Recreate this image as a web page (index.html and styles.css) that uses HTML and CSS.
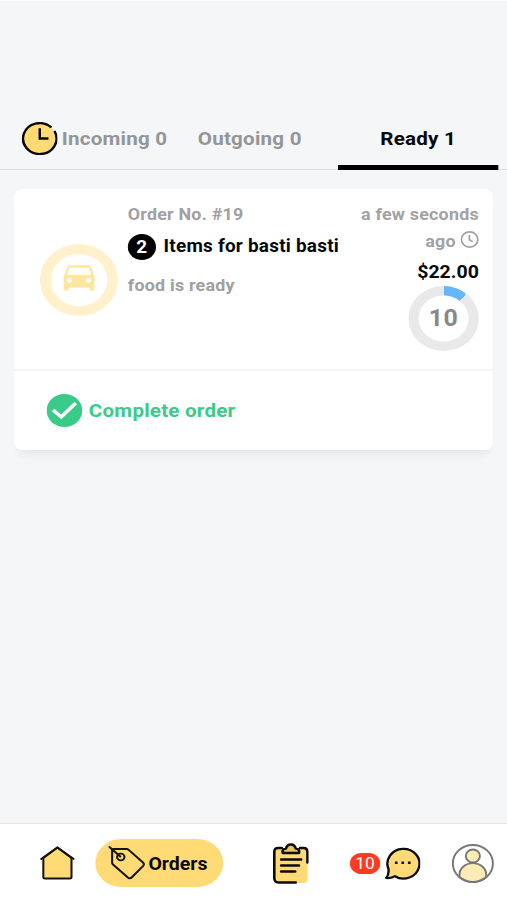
FILE: index.html
```html
<!DOCTYPE html>
<html lang="en">
<head>
<meta charset="utf-8">
<title>Orders</title>
<link rel="stylesheet" href="styles.css">
</head>
<body>
<div class="app">
  <header class="tabs">
    <div class="tab tab-incoming">
      <svg class="tab-icon" width="33" height="33" viewBox="0 0 32 32" fill="none" stroke="#080808" stroke-width="2.2">
        <circle cx="16" cy="16" r="14.5" fill="#ffda75" stroke="none"/>
        <path d="M26 4.7A15 15 0 1 0 29.7 9.5" stroke-linecap="round"/>
        <path d="M16.200 6v10h7.8"/>
      </svg>
      <span>Incoming 0</span>
    </div>
    <div class="tab tab-outgoing"><span>Outgoing 0</span></div>
    <div class="tab tab-ready"><span>Ready 1</span></div>
  </header>
  <main class="content">
    <article class="card">
      <div class="summary">
        <div class="type">
          <div class="type-ring">
            <svg class="car" width="38" height="38" viewBox="0 0 24 24" fill="#ffe69e"><path d="M18.92 5.01C18.72 4.42 18.16 4 17.5 4h-11c-.66 0-1.21.42-1.42 1.01L3 11v8c0 .55.45 1 1 1h1c.55 0 1-.45 1-1v-1h12v1c0 .55.45 1 1 1h1c.55 0 1-.45 1-1v-8l-2.08-5.99zM6.5 15c-.83 0-1.5-.67-1.5-1.5S5.67 12 6.5 12s1.500.67 1.500 1.500S7.330 15 6.500 15zm11 0c-.83 0-1.500-.67-1.500-1.500s.67-1.500 1.500-1.500 1.500.67 1.500 1.500-.67 1.500-1.500 1.500zM5 10l1.300-4.500h11.400L19 10H5z"/></svg>
          </div>
        </div>
        <div class="details">
          <div class="number">Order No. #19</div>
          <div class="items"><span class="count">2</span><span class="items-text">Items for basti basti</span></div>
          <div class="status">food is ready</div>
        </div>
        <div class="meta">
          <div class="time">a few seconds<br>ago <svg class="time-icon" width="17" height="17" viewBox="0 0 17 17" fill="none" stroke="#a2a2a2" stroke-width="1.6"><circle cx="8.500" cy="8.500" r="7.600"/><path d="M8.300 4v4.700l3 2"/></svg></div>
          <div class="price">$22.00</div>
          <div class="gauge"><span>10</span></div>
        </div>
      </div>
      <div class="action">
        <svg width="33" height="33" viewBox="0 0 33 33" fill="none"><circle cx="16.500" cy="16.500" r="16.500" fill="#3bcb89"/><path d="M6 16l7.500 7L27 9" stroke="#fff" stroke-width="3.300"/></svg>
        <span>Complete order</span>
      </div>
    </article>
  </main>
  <nav class="nav">
    <svg class="nav-home" width="32" height="34" viewBox="0 0 32 34" fill="#ffda75" stroke="#15130a" stroke-width="1.900" stroke-linejoin="round" stroke-linecap="round"><path d="M3 12v19q0 1.500 1.500 1.500h23q1.500 0 1.500-1.500V12L16 1.500z"/><path d="M1 13L16 1.500 31 13" fill="none"/></svg>
    <div class="nav-orders">
      <svg width="34" height="34" viewBox="0 0 34 34" fill="none" stroke="#15130a" stroke-width="1.900" stroke-linejoin="round" stroke-linecap="round"><path d="M3.500 4.500q0-1.500 1.500-1.500h12q1 0 1.800.8L32 16.500q1.500 1.500.2 3.300L21.500 31.500q-1.500 1.500-3.200.2L4.300 18.500q-.8-.8-.8-1.800z"/><circle cx="11.500" cy="11" r="3.400"/><path d="M1 1l10 9.500"/></svg>
      <span>Orders</span>
    </div>
    <svg class="nav-list" width="33" height="41" viewBox="0 0 33 41" fill="none" stroke="#0b0b0b" stroke-width="2.400" stroke-linecap="round" stroke-linejoin="round"><path d="M4 5h25q3 0 3 3v28q0 4-4 4H4q-3 0-3-3V8q0-3 3-3z" fill="#ffda75" stroke="none"/><path d="M8 5H5Q1.200 5 1.200 9v26q0 4.500 4 4.500H21M25 5h3q3.800 0 3.800 4v10.500"/><path d="M9 10q-1-4 3-4.500 1-4 4.500-4t4.500 4q4 .5 3 4.500z" fill="#e9c35f"/><path d="M7.500 16.500h18.500M7.500 22.500h16.500M7.500 28.500h13"/></svg>
    <div class="nav-chat">
      <span class="badge">10</span>
      <svg width="33" height="34" viewBox="0 0 33 34"><path d="M3.600 23A14.800 14.800 0 1 1 9.500 30.200Q6.500 32.500 1.500 32Q4.200 29 3.600 23z" fill="#ffda75" stroke="#0b0b0b" stroke-width="2.200" stroke-linejoin="round"/><path d="M9.500 15.500h2.500v2.500H9.500zM15.500 15.500H18v2.500h-2.500zM21.500 15.500H24v2.500h-2.500z" fill="#111"/></svg>
    </div>
    <svg class="nav-user" width="39" height="39" viewBox="0 0 39 39" fill="#ffecb5" stroke="#777" stroke-width="1.800"><circle cx="19.500" cy="19.500" r="18.500" fill="none"/><circle cx="19.500" cy="12" r="6.500"/><path d="M7.200 33V30.500a12.300 11.300 0 0 1 24.600 0V33Q26 38 19.500 38T7.200 33z"/></svg>
  </nav>
</div>
</body>
</html>
```
FILE: styles.css
```css
* { box-sizing: border-box; }

body {
  margin: 0;
  background: #f4f6f8;
  overflow: hidden;
}

.app {
  display: flex;
  flex-direction: column;
  width: 468px;
  height: 900px;
  border-top: 1px solid #fbfcfc;
  background: #f4f6f8;
  font-family: Roboto, "Liberation Sans", sans-serif;
  font-weight: 700;
  color: #080808;
  transform: scaleX(1.08333);
  transform-origin: 0 0;
}

.tabs {
  display: grid;
  grid-template-columns: 164px 148px 148px;
  height: 169px;
  padding-top: 105px;
  border-bottom: 1px solid #dcdee0;
  font-size: 19px;
  letter-spacing: 0.200px;
  color: #949596;
}

.tab {
  display: flex;
  align-items: center;
  justify-content: center;
  height: 64px;
}

.tab-incoming {
  justify-content: flex-start;
  gap: 4px;
  padding-left: 20px;
}

.tab-icon { flex: none; }
.tab-outgoing { padding-right: 15px; }

.tab-ready {
  padding-top: 5px;
  border-bottom: 5px solid #000;
  color: #080808;
}

.content {
  flex: 1;
  padding: 19px 13px 0;
}

.card {
  height: 261px;
  border-radius: 8px;
  background: #fff;
  box-shadow: 0 9px 9px -6px rgba(50, 55, 65, 0.1);
}

.summary {
  display: grid;
  grid-template-columns: 105px 1fr 115px;
  height: 182px;
  padding-right: 13px;
  border-bottom: 2px solid #f4f4f4;
}

.type {
  display: flex;
  align-items: center;
  justify-content: center;
  padding: 2px 0 0 15px;
}

.type-ring {
  display: flex;
  align-items: center;
  justify-content: center;
  width: 72px;
  height: 72px;
  border: 10px solid #fff1cc;
  border-radius: 50%;
}

.car { flex: none; margin-bottom: 4px; }

.details {
  padding-top: 13px;
  font-size: 16.500px;
  letter-spacing: 0.200px;
  color: #a0a0a0;
  white-space: nowrap;
}

.number { line-height: 25px; }

.items {
  display: flex;
  align-items: center;
  gap: 7px;
  height: 39px;
  margin-bottom: 1px;
  color: #080808;
}

.items-text {
  padding-bottom: 2px;
  font-size: 17.500px;
}

.count {
  width: 26px;
  height: 26px;
  border-radius: 50%;
  background: #000;
  color: #fff;
  font-size: 17.500px;
  line-height: 26px;
  text-align: center;
}

.status { line-height: 38px; }

.meta {
  display: flex;
  flex-direction: column;
  align-items: flex-end;
  padding-top: 12px;
  white-space: nowrap;
}

.time {
  font-size: 16.500px;
  line-height: 27px;
  letter-spacing: 0.200px;
  color: #a2a2a2;
  text-align: right;
}

.time-icon { vertical-align: -1px; }

.price {
  padding-top: 3px;
  font-size: 18px;
  line-height: 28px;
}

.gauge {
  display: grid;
  place-items: center;
  width: 65px;
  height: 65px;
  border-radius: 50%;
  background: radial-gradient(circle, #fff 22.500px, transparent 23.500px), conic-gradient(#65b5fb 0 40deg, #e9e9e9 40deg);
  font-size: 23px;
  letter-spacing: 0.500px;
  color: #888;
}

.action {
  display: flex;
  align-items: center;
  gap: 6px;
  height: 78px;
  padding-left: 30px;
  color: #3bcb89;
  font-size: 19px;
  letter-spacing: 0.200px;
}

.action span { padding-top: 1px; }

.nav {
  display: flex;
  align-items: center;
  height: 77px;
  padding-top: 2px;
  border-top: 1px solid #e4e6e8;
  background: #fff;
}

.nav > * { flex: none; }
.nav-home { margin-left: 37px; }

.nav-orders {
  display: flex;
  align-items: center;
  gap: 3px;
  width: 118px;
  height: 48px;
  margin-left: 19px;
  padding-left: 12px;
  border-radius: 24px;
  background: #ffda75;
  font-size: 18px;
}

.nav-list { margin-left: 46px; }

.nav-chat {
  display: flex;
  align-items: center;
  gap: 4px;
  margin-left: 38px;
}

.badge {
  width: 28px;
  height: 21px;
  border-radius: 11px;
  background: #ff3a22;
  color: #fff;
  font-size: 16px;
  font-weight: 400;
  line-height: 21px;
  text-align: center;
}

.nav-user { margin-left: 29px; }
```
